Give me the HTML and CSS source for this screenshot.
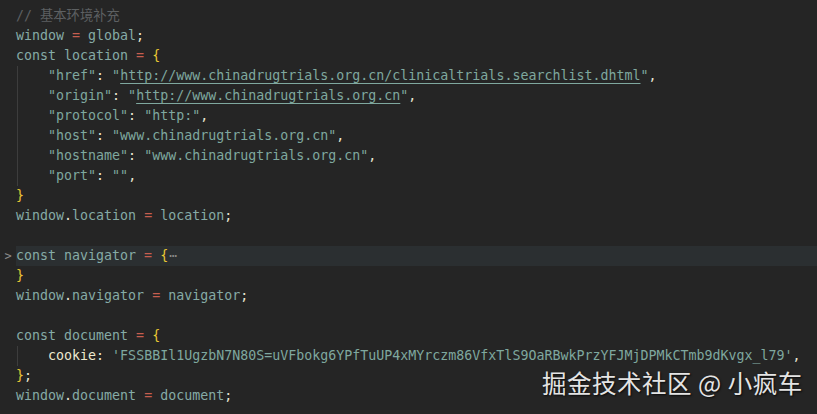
FILE: index.html
```html
<!DOCTYPE html>
<html lang="zh-CN">
<head>
    <meta charset="UTF-8">
    <meta name="viewport" content="width=device-width, initial-scale=1.0">
    <title>env.js</title>
    <link rel="stylesheet" href="styles.css">
</head>
<body>
    <div class="editor">
        <div class="line"><span class="gutter"></span><span class="code"><span class="cm">// 基本环境补充</span></span></div>
        <div class="line"><span class="gutter"></span><span class="code">window <span class="op">=</span> global<span class="pn">;</span></span></div>
        <div class="line"><span class="gutter"></span><span class="code">const location <span class="op">=</span> <span class="br">{</span></span></div>
        <div class="block">
            <div class="line"><span class="gutter"></span><span class="code">    <span class="str">"href"</span><span class="pn">:</span> <span class="str">"<span class="link">http://www.chinadrugtrials.org.cn/clinicaltrials.searchlist.dhtml</span>"</span><span class="pn">,</span></span></div>
            <div class="line"><span class="gutter"></span><span class="code">    <span class="str">"origin"</span><span class="pn">:</span> <span class="str">"<span class="link">http://www.chinadrugtrials.org.cn</span>"</span><span class="pn">,</span></span></div>
            <div class="line"><span class="gutter"></span><span class="code">    <span class="str">"protocol"</span><span class="pn">:</span> <span class="str">"http:"</span><span class="pn">,</span></span></div>
            <div class="line"><span class="gutter"></span><span class="code">    <span class="str">"host"</span><span class="pn">:</span> <span class="str">"www.chinadrugtrials.org.cn"</span><span class="pn">,</span></span></div>
            <div class="line"><span class="gutter"></span><span class="code">    <span class="str">"hostname"</span><span class="pn">:</span> <span class="str">"www.chinadrugtrials.org.cn"</span><span class="pn">,</span></span></div>
            <div class="line"><span class="gutter"></span><span class="code">    <span class="str">"port"</span><span class="pn">:</span> <span class="str">""</span><span class="pn">,</span></span></div>
        </div>
        <div class="line"><span class="gutter"></span><span class="code"><span class="br">}</span></span></div>
        <div class="line"><span class="gutter"></span><span class="code">window<span class="pn">.</span>location <span class="op">=</span> location<span class="pn">;</span></span></div>
        <div class="line"><span class="gutter"></span><span class="code"></span></div>
        <div class="line current"><span class="gutter">&gt;</span><span class="code">const navigator <span class="op">=</span> <span class="br">{</span><span class="fold">⋯</span></span></div>
        <div class="line"><span class="gutter"></span><span class="code"><span class="br">}</span></span></div>
        <div class="line"><span class="gutter"></span><span class="code">window<span class="pn">.</span>navigator <span class="op">=</span> navigator<span class="pn">;</span></span></div>
        <div class="line"><span class="gutter"></span><span class="code"></span></div>
        <div class="line"><span class="gutter"></span><span class="code">const document <span class="op">=</span> <span class="br">{</span></span></div>
        <div class="block">
            <div class="line"><span class="gutter"></span><span class="code">    <span class="key">cookie</span><span class="pn">:</span> <span class="str">'FSSBBIl1UgzbN7N80S=uVFbokg6YPfTuUP4xMYrczm86VfxTlS9OaRBwkPrzYFJMjDPMkCTmb9dKvgx_l79'</span><span class="pn">,</span></span></div>
        </div>
        <div class="line"><span class="gutter"></span><span class="code"><span class="br">}</span><span class="pn">;</span></span></div>
        <div class="line"><span class="gutter"></span><span class="code">window<span class="pn">.</span>document <span class="op">=</span> document<span class="pn">;</span></span></div>
    </div>

    <div class="watermark">掘金技术社区 @ 小疯车</div>
</body>
</html>
```

FILE: styles.css
```css
html, body {
    margin: 0;
    height: 100%;
    background: #252525;
    overflow: hidden;
}

.editor {
    padding-top: 6px;
    font-family: "DejaVu Sans Mono", "Noto Sans CJK SC", monospace;
    font-size: 13.3px;
    color: #86aba6;
}

.line {
    display: flex;
    height: 20px;
    line-height: 20px;
    white-space: pre;
}

.gutter {
    width: 16px;
    flex: none;
    color: #8a8a8a;
    text-align: center;
    font-size: 12px;
}

.code {
    flex: 1;
}

.block {
    box-shadow: inset 17px 0 0 #252525, inset 18px 0 0 #3d3d3d;
}

.current .code {
    background: #2b2f31;
}

.cm {
    color: #5d6062;
}

.op {
    color: #c65e4f;
}

.br {
    color: #e8c834;
}

.pn {
    color: #e9e6d2;
}

.str {
    color: #7fa89f;
}

.link {
    text-decoration: underline;
    text-underline-offset: 3px;
}

.key {
    color: #ece9cf;
}

.fold {
    color: #8a8a8a;
    font-size: 13px;
    margin-left: 1px;
}

.watermark {
    position: absolute;
    left: 542px;
    top: 366px;
    font-family: "Noto Sans CJK SC", "Noto Sans", sans-serif;
    font-size: 24.5px;
    line-height: 34px;
    color: #e4e4e4;
    text-shadow: 1px 1px 2px rgba(0, 0, 0, 0.8);
    letter-spacing: 0.5px;
}
```
